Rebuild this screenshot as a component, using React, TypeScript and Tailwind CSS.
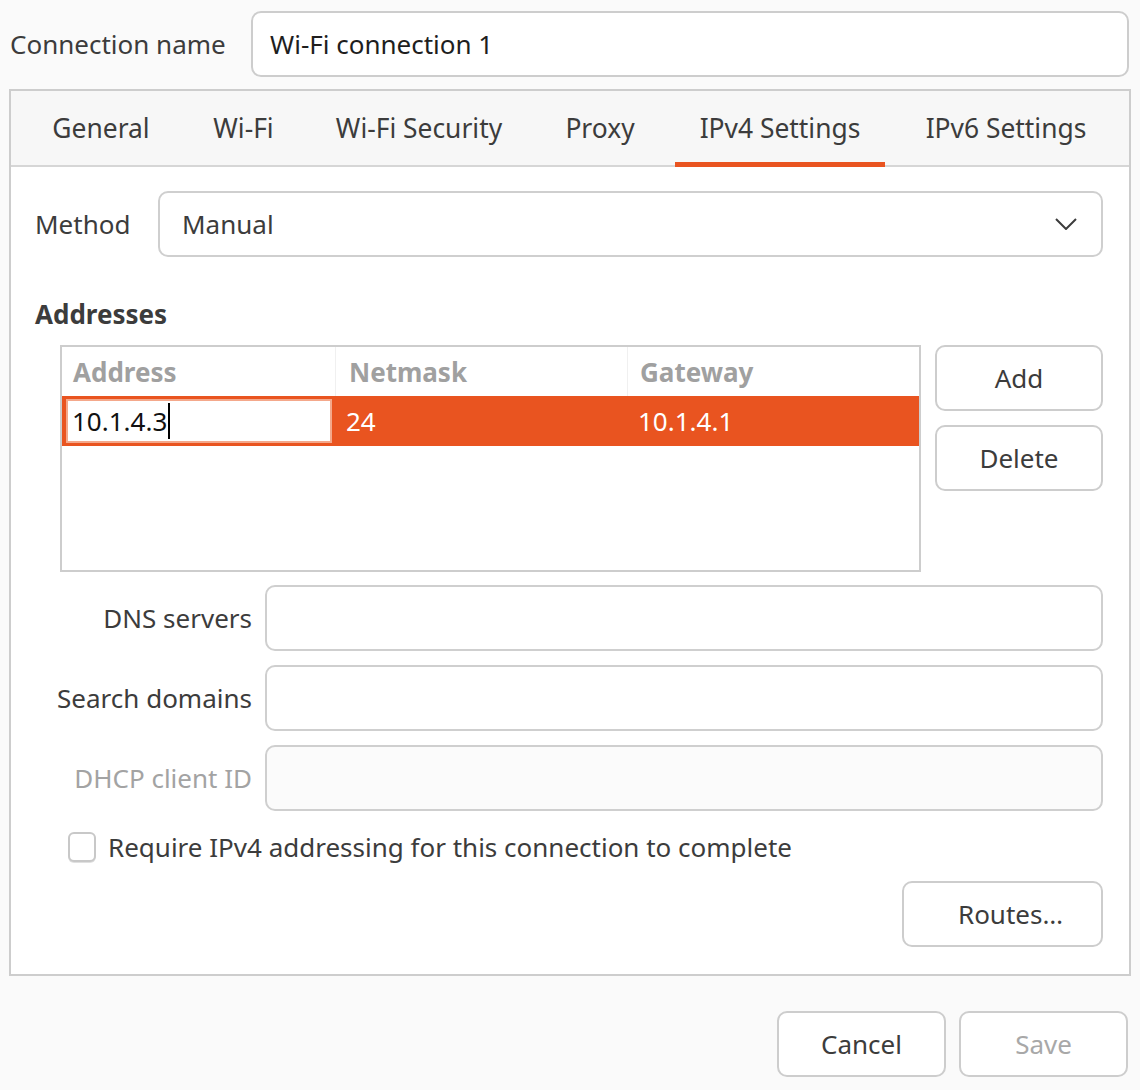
const tabs = [
	{ label: "General", w: "w-[146px]" },
	{ label: "Wi-Fi", w: "w-[107px]" },
	{ label: "Wi-Fi Security", w: "w-[212px]" },
	{ label: "Proxy", w: "w-[118px]" },
	{ label: "IPv4 Settings", w: "w-[210px]" },
	{ label: "IPv6 Settings", w: "w-[210px]" },
];

const Field = ({ label, disabled }: { label: string; disabled?: boolean }) => (
	<div className="flex items-center">
		<div className={`w-[230px] pr-[13px] text-right ${disabled ? "text-[#a3a3a3]" : ""}`}>{label}</div>
		<div
			className={`flex-1 h-[66px] rounded-[10px] border-2 border-[#cfcfcf] ${
				disabled ? "bg-[#fbfbfb]" : "bg-white"
			}`}></div>
	</div>
);

const Btn = ({ children, className = "", disabled }: { children: React.ReactNode; className?: string; disabled?: boolean }) => (
	<div
		className={`h-[66px] rounded-[10px] border-2 border-[#cdcdcd] bg-white flex items-center justify-center ${
			disabled ? "text-[#a8a8a8]" : ""
		} ${className}`}>
		{children}
	</div>
);

export default function App() {
	return (
		<div className="w-[1140px] h-[1090px] bg-[#fafafa] text-[26px] leading-[36px] text-[#3c3c3c] font-['Noto_Sans',sans-serif] overflow-hidden">
			{/* Connection name */}
			<div className="flex items-center pt-[11px] pl-[10px] pr-[11px]">
				<div className="w-[241px]">Connection name</div>
				<div className="flex-1 h-[66px] rounded-[10px] border-2 border-[#cdcdcd] bg-white flex items-center px-[17px] text-[#1e1e1e]">
					Wi-Fi connection 1
				</div>
			</div>

			{/* Notebook */}
			<div className="mt-[12px] mx-[9px] w-[1122px] h-[887px] border-2 border-[#cdcdcd] bg-white flex flex-col">
				<div className="h-[76px] bg-[#f7f7f7] border-b-2 border-[#d6d6d6] flex pl-[17px] gap-[16px] text-[26.4px]">
					{tabs.map((t) => (
						<div
							key={t.label}
							className={`${t.w} flex items-center justify-center pt-[2px] border-b-[5px] -mb-[2px] ${
								t.label === "IPv4 Settings" ? "border-[#e95420]" : "border-transparent"
							}`}>
							{t.label}
						</div>
					))}
				</div>

				<div className="flex-1 pt-[24px] pl-[24px] pr-[26px] flex flex-col">
					{/* Method */}
					<div className="flex items-center">
						<div className="w-[123px]">Method</div>
						<div className="flex-1 h-[66px] rounded-[10px] border-2 border-[#cfcfcf] bg-white flex items-center justify-between pl-[22px] pr-[24px]">
							<span>Manual</span>
							<svg width="22" height="12" viewBox="0 0 22 12" fill="none">
								<path d="M1 1 L11 11 L21 1" stroke="#3c3c3c" strokeWidth="2" />
							</svg>
						</div>
					</div>

					<div className="mt-[39px] font-bold">Addresses</div>

					{/* Addresses table */}
					<div className="mt-[13px] ml-[25px] flex gap-[14px]">
						<div className="w-[861px] h-[227px] border-2 border-[#cdcdcd] bg-white flex flex-col">
							<div className="h-[49px] flex font-bold text-[#a0a0a0]">
								<div className="w-[274px] border-r border-[#f0f0f0] px-[11px] flex items-center">Address</div>
								<div className="w-[292px] border-r border-[#f0f0f0] px-[13px] flex items-center">Netmask</div>
								<div className="flex-1 px-[12px] flex items-center">Gateway</div>
							</div>
							<div className="h-[50px] bg-[#e95420] flex items-center text-white">
								<div className="w-[274px] h-full py-[3px] pl-[4px] pr-[4px]">
									<div className="h-full bg-white border-2 border-[#f4a88b] flex items-center pl-[4px] text-[#111]">
										10.1.4.3
										<span className="inline-block w-[2px] h-[36px] bg-black ml-[1px]"></span>
									</div>
								</div>
								<div className="w-[292px] pl-[10px]">24</div>
								<div className="flex-1 pl-[10px]">10.1.4.1</div>
							</div>
						</div>
						<div className="w-[168px] flex flex-col gap-[14px]">
							<Btn>Add</Btn>
							<Btn>Delete</Btn>
						</div>
					</div>

					{/* Fields */}
					<div className="mt-[13px] flex flex-col gap-[14px]">
						<Field label="DNS servers" />
						<Field label="Search domains" />
						<Field label="DHCP client ID" disabled />
					</div>

					<div className="mt-[18px] ml-[33px] flex items-center gap-[12px]">
						<div className="w-[28px] h-[30px] rounded-[6px] border-2 border-[#c8c8c8] bg-white shadow-[0_1px_0_#e0e0e0]"></div>
						<span>Require IPv4 addressing for this connection to complete</span>
					</div>

					<div className="mt-[16px] flex justify-end">
						<Btn className="w-[201px] pl-[16px]">Routes…</Btn>
					</div>
				</div>
			</div>

			{/* Dialog buttons */}
			<div className="mt-[35px] pr-[12px] flex justify-end gap-[13px]">
				<Btn className="w-[169px]">Cancel</Btn>
				<Btn className="w-[169px]" disabled>
					Save
				</Btn>
			</div>
		</div>
	);
}
